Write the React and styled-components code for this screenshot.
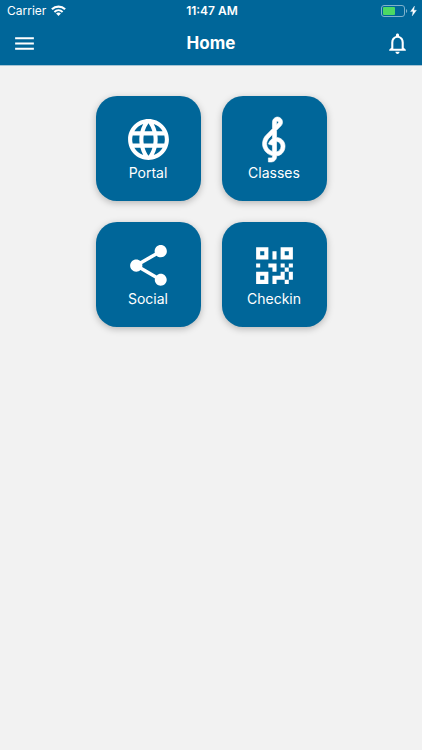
import React from 'react'
import styled, {createGlobalStyle} from 'styled-components'
import {MdLanguage, MdMenu, MdNotificationsNone, MdShare} from 'react-icons/md'

const GlobalStyle = createGlobalStyle`
    :root {
        --main_blue: #006699;
        --main_white: #ffffff;
        --page_grey: #f2f2f2;
    }
    body {
        margin: 0;
        background: var(--page_grey);
        font-family: Inter, "Liberation Sans", sans-serif;
    }
`;

const WifiIcon = () => (
    <svg width="15" height="12" viewBox="0 0 15 12" fill="none" stroke="currentColor" strokeWidth="2.2" aria-hidden="true">
        <path d="M.9 4.300C4.600.7 10.400.7 14.100 4.300" />
        <path d="M3.400 6.900c2.400-2.200 5.800-2.200 8.200 0" strokeWidth="2" />
        <path d="M7.500 10.900 5.100 8.500c1.300-1.200 3.500-1.200 4.800 0z" fill="currentColor" stroke="none" />
    </svg>
)

const BatteryIcon = () => (
    <svg width="36" height="12" viewBox="0 0 36 12" aria-hidden="true">
        <rect x=".5" y=".5" width="23" height="11" rx="2.5" fill="none" stroke="#7fb2cc" />
        <rect x="2" y="2" width="12" height="8" rx="1" fill="#4cd964" />
        <path d="M25 4c1.6.5 1.6 3.5 0 4z" fill="#7fb2cc" />
        <path d="M33.5 1 29.500 6.600h2.500L31.200 11l4.300-5.800h-2.700z" fill="#fff" stroke="#fff" strokeWidth=".3" />
    </svg>
)

const ClefIcon = () => (
    <svg viewBox="0 0 24 24" fill="currentColor" aria-hidden="true">
        <path d="M13 11V7.5L15.2 5.29C16 4.5 16.15 3.24 15.59 2.26C15.14 1.47 14.32 1 13.45 1C13.24 1 13 1.03 12.81 1.09C11.73 1.38 11 2.38 11 3.5V6.74L7.86 9.91C6.2 11.6 5.7 14.13 6.61 16.34C7.38 18.24 9.06 19.55 11 19.89V20.5C11 20.76 10.77 21 10.5 21H9V23H10.5C11.85 23 13 21.89 13 20.5V20C15.03 20 17.16 18.08 17.16 15.25C17.16 12.95 15.24 11 13 11M13 3.5C13 3.27 13.11 3.09 13.32 3.03C13.54 2.97 13.77 3.06 13.88 3.26C14 3.46 13.96 3.71 13.8 3.87L13 4.73V3.5M11 11.5C10.03 12.14 9.3 13.24 9.04 14.26L11 14.78V17.83C9.87 17.53 8.9 16.71 8.43 15.57C7.84 14.11 8.16 12.45 9.26 11.33L11 9.5V11.5M13 18V12.94C14.17 12.94 15.18 14.04 15.18 15.25C15.18 17 13.91 18 13 18Z" stroke="currentColor" strokeWidth=".3" />
    </svg>
)

const QrIcon = () => (
    <svg viewBox="0 0 24 24" fill="currentColor" aria-hidden="true">
        <path d="M3,11H5V13H3V11M11,5H13V9H11V5M9,11H13V15H11V13H9V11M15,11H17V13H19V11H21V13H19V15H21V19H19V21H17V19H13V21H11V17H15V15H17V13H15V11M19,19V15H17V19H19M15,3H21V9H15V3M17,5V7H19V5H17M3,3H9V9H3V3M5,5V7H7V5H5M3,15H9V21H3V15M5,17V19H7V17H5Z" />
    </svg>
)

const tiles = [
    {label: 'Portal', Icon: MdLanguage},
    {label: 'Classes', Icon: ClefIcon},
    {label: 'Social', Icon: MdShare},
    {label: 'Checkin', Icon: QrIcon},
]

export default function App() {
    return (
        <>
            <GlobalStyle />
            <Header>
                <StatusBar>
                    <Carrier>Carrier <WifiIcon /></Carrier>
                    <Clock>11:47 AM</Clock>
                    <BatteryIcon />
                </StatusBar>
                <NavBar>
                    <IconButton aria-label="Menu"><MdMenu /></IconButton>
                    <Title>Home</Title>
                    <IconButton aria-label="Notifications"><MdNotificationsNone /></IconButton>
                </NavBar>
            </Header>
            <TileGrid>
                {tiles.map(({label, Icon}) => (
                    <Tile key={label}>
                        <Icon />
                        {label}
                    </Tile>
                ))}
            </TileGrid>
        </>
    )
}

const Header = styled.header`
    background: var(--main_blue);
    color: var(--main_white);
    border-bottom: 1px solid #a6c4d4;
`;

const StatusBar = styled.div`
    display: grid;
    grid-template-columns: 1fr auto 1fr;
    align-items: center;
    height: 22px;
    padding: 0 5px 0 7px;
    font-size: 12px;
    line-height: 16px;
    > :last-child {
        justify-self: end;
    }
`;

const Carrier = styled.span`
    display: flex;
    align-items: center;
    gap: 5px;
`;

const Clock = styled.span`
    font-weight: 600;
`;

const NavBar = styled.nav`
    display: flex;
    align-items: center;
    justify-content: space-between;
    height: 43px;
    padding: 0 12px;
`;

const Title = styled.h1`
    margin: 0;
    font-size: 17px;
    line-height: 25px;
    font-weight: 700;
`;

const IconButton = styled.button`
    display: flex;
    padding: 0;
    border: none;
    background: none;
    color: inherit;
    cursor: pointer;
    svg {
        width: 25px;
        height: 25px;
    }
`;

const TileGrid = styled.main`
    display: grid;
    grid-template-columns: repeat(2, 105px);
    justify-content: center;
    gap: 21px;
    padding: 30px 0;
`;

const Tile = styled.button`
    display: flex;
    flex-direction: column;
    align-items: center;
    justify-content: center;
    height: 105px;
    padding: 0 0 1px;
    border: none;
    border-radius: 21px;
    background: var(--main_blue);
    color: var(--main_white);
    box-shadow: 0 2px 7px rgba(0, 0, 0, 0.25);
    font-family: inherit;
    font-size: 14px;
    line-height: 17px;
    cursor: pointer;
    svg {
        width: 49px;
        height: 49px;
    }
`;
